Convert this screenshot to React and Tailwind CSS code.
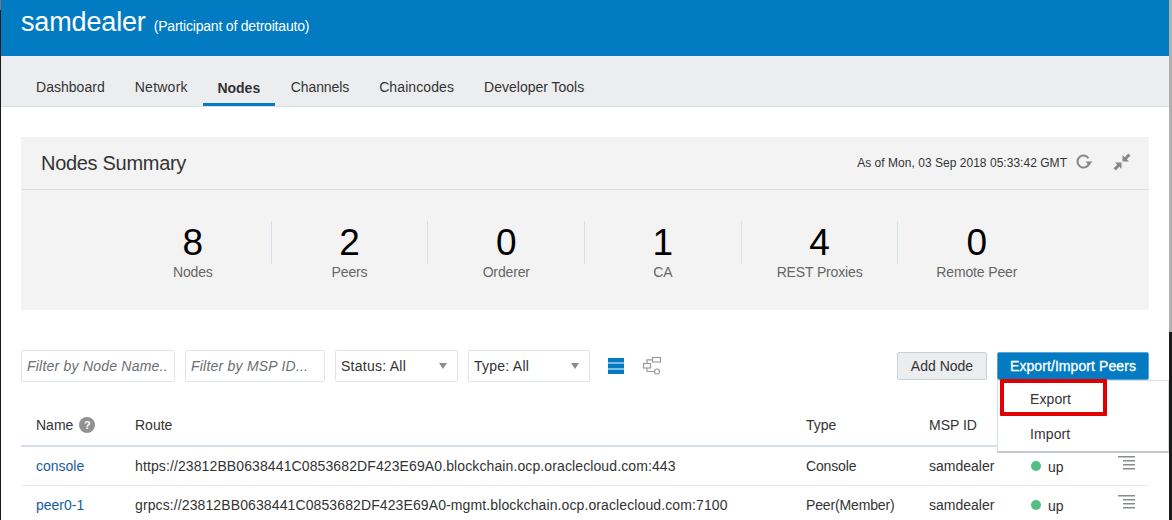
const tabs = [
  { name: 'Dashboard', cls: 'tracking-[0.03px]' },
  { name: 'Network', cls: 'tracking-[0.24px]' },
  { name: 'Nodes', active: true },
  { name: 'Channels', cls: 'tracking-[-0.1px]' },
  { name: 'Chaincodes', cls: 'tracking-[0.1px]' },
  { name: 'Developer Tools' },
];

const stats = [
  { value: '8', label: 'Nodes' },
  { value: '2', label: 'Peers' },
  { value: '0', label: 'Orderer' },
  { value: '1', label: 'CA' },
  { value: '4', label: 'REST Proxies' },
  { value: '0', label: 'Remote Peer' },
];

const rows = [
  {
    name: 'console',
    route: 'https://23812BB0638441C0853682DF423E69A0.blockchain.ocp.oraclecloud.com:443',
    type: 'Console',
  },
  {
    name: 'peer0-1',
    route: 'grpcs://23812BB0638441C0853682DF423E69A0-mgmt.blockchain.ocp.oraclecloud.com:7100',
    type: 'Peer(Member)',
  },
];

function RefreshIcon() {
  return (
    <svg width="17" height="15" viewBox="0 0 17 15" fill="none">
      <path d="M12.500 4.200A6 6 0 1 0 13 10" stroke="#85888b" strokeWidth="2" />
      <path d="M9.500 7.500h7l-3.500 4z" fill="#85888b" />
    </svg>
  );
}

function CollapseIcon() {
  return (
    <svg width="18" height="18" viewBox="0 0 18 18" fill="#85888b">
      <path d="M9.500 8.500V2l2.200 2.200L15.200 .5 17.500 2.800 13.800 6.300 16 8.500z" />
      <path d="M8.500 9.500V16l-2.200-2.200L2.800 17.500 .5 15.200 4.200 11.700 2 9.500z" />
    </svg>
  );
}

function TopologyIcon() {
  return (
    <svg width="20" height="20" viewBox="0 0 20 20" fill="none" stroke="#9a9da0" strokeWidth="1.200">
      <rect x="10.500" y="1.500" width="8" height="4.500" />
      <rect x="1.500" y="7.500" width="7" height="4.500" />
      <circle cx="15" cy="15.500" r="2.500" />
      <path d="M5 7.500V3.800h5.500M5 12v3.500h7.500" />
    </svg>
  );
}

function ListIcon() {
  return (
    <svg width="16" height="16" viewBox="0 0 16 16" fill="#027bc3">
      <rect x="0" y="0" width="16" height="4.500" />
      <rect x="0" y="5.500" width="16" height="5" />
      <rect x="0" y="11.500" width="16" height="4.500" />
    </svg>
  );
}

function RowMenuIcon() {
  return (
    <svg width="17" height="15" viewBox="0 0 17 15" fill="#8a8d90">
      <rect x="0" y="0" width="17" height="1.500" />
      <rect x="5" y="4" width="12" height="1.500" />
      <rect x="5" y="8" width="12" height="1.500" />
      <rect x="5" y="12" width="12" height="1.500" />
    </svg>
  );
}

function SelectBox({ label, width }) {
  return (
    <div className={`${width} h-8 flex items-center justify-between pl-[5px] pr-[10px] bg-white border border-[#dfe4e7] rounded-[2px]`}>
      <span className="text-[14px] tracking-[0.25px] text-[#333]">{label}</span>
      <span className="w-0 h-0 border-x-[4.500px] border-x-transparent border-t-[6px] border-t-[#8a8d90]" />
    </div>
  );
}

export default function App() {
  return (
    <div className="relative w-[1172px] h-[520px] overflow-hidden bg-white font-['Liberation_Sans',Arial,sans-serif] text-[#333]">
      {/* Header */}
      <header className="h-14 bg-[#027bc3] pl-[21px] pt-[4px] flex items-start gap-[8px] text-white">
        <span className="text-[27px] leading-[36px] tracking-[-0.15px]">samdealer</span>
        <span className="text-[14px] leading-[18px] mt-[13px] tracking-[-0.2px]">(Participant of detroitauto)</span>
      </header>

      {/* Nav tabs */}
      <nav className="h-[51px] bg-[#ecedef] border-b border-[#d6dfe6] pl-[21px] flex items-end">
        {tabs.map((tab) => (
          <div
            key={tab.name}
            className={
              tab.active
                ? 'h-[50px] mr-px pt-[23px] border-b-[3px] border-[#027bc3] w-[72px] text-center text-[14px] leading-[18px] font-bold text-[#333]'
                : `h-[50px] px-[15px] pt-[22px] text-[14px] leading-[18px] text-[#333] ${tab.cls || ''}`
            }
          >
            {tab.name}
          </div>
        ))}
      </nav>

      <main className="px-[21px] pt-[30px] w-[1149px] box-content">
        {/* Summary panel */}
        <section className="w-[1128px] h-[173px] bg-[#f3f3f3]">
          <div className="h-[53px] border-b border-[#d6dfe6] pl-5 pr-[18px] flex items-center justify-between">
            <h2 className="text-[20px] tracking-[-0.3px] text-[#333]">Nodes Summary</h2>
            <div className="flex items-center">
              <span className="text-[12px] tracking-[0.03px] text-[#333] mt-[-1px]">As of Mon, 03 Sep 2018 05:33:42 GMT</span>
              <span className="ml-[9px] mb-[4px]">
                <RefreshIcon />
              </span>
              <span className="ml-[20px] mb-[3px]">
                <CollapseIcon />
              </span>
            </div>
          </div>
          <div className="pl-[94px] pt-[31px] flex">
            {stats.map((stat, i) => (
              <div
                key={i}
                className={`w-[156.700px] h-[43px] flex flex-col items-center ${i < 5 ? 'border-r border-[#d6dfe6]' : ''}`}
              >
                <span className="text-[37px] leading-[44px] text-black">{stat.value}</span>
                <span className="text-[14px] leading-[18px] mt-[-2px] tracking-[-0.15px] text-[#666]">{stat.label}</span>
              </div>
            ))}
          </div>
        </section>

        {/* Toolbar */}
        <div className="mt-10 h-8 w-[1128px] flex items-center">
          <div className="w-[154px] h-8 flex items-center pl-[5px] pt-px bg-white border border-[#dfe4e7] rounded-[2px] text-[14px] tracking-[0.22px] italic text-[#6b6f73] whitespace-nowrap overflow-hidden">
            Filter by Node Name..
          </div>
          <div className="ml-[10px] w-[140px] h-8 flex items-center pl-[5px] pt-px bg-white border border-[#dfe4e7] rounded-[2px] text-[14px] tracking-[0.22px] italic text-[#6b6f73] whitespace-nowrap overflow-hidden">
            Filter by MSP ID...
          </div>
          <div className="ml-[10px]">
            <SelectBox label="Status: All" width="w-[123px]" />
          </div>
          <div className="ml-[10px]">
            <SelectBox label="Type: All" width="w-[122px]" />
          </div>
          <span className="ml-[18px]">
            <ListIcon />
          </span>
          <span className="ml-[18px] mt-[-1px]">
            <TopologyIcon />
          </span>
          <button className="ml-auto w-[90px] h-7 bg-[#ecedef] border border-[#c9d2d8] rounded-[2px] text-[14px] text-[#333]">
            Add Node
          </button>
          <button className="ml-[10px] w-[152px] h-7 bg-[#027bc3] border border-[#5aa5d6] rounded-[2px] text-[14px] tracking-[0.08px] [-webkit-text-stroke:0.3px_white] text-white">
            Export/Import Peers
          </button>
        </div>

        {/* Nodes table */}
        <div className="mt-[23px] w-[1128px] text-[14px]">
          <div className="h-[42px] border-b-2 border-[#d6dfe6] flex items-center">
            <div className="w-[114px] pl-[15px] flex items-center gap-[6px]">
              Name
              <span className="w-4 h-4 rounded-full bg-[#8f9194] text-white text-[11px] leading-4 text-center font-bold">?</span>
            </div>
            <div className="w-[671px]">Route</div>
            <div className="w-[123px]">Type</div>
            <div>MSP ID</div>
          </div>
          {rows.map((row) => (
            <div key={row.name} className="h-[39px] border-b border-[#e8eaec] flex items-center">
              <div className="w-[114px] pl-[15px] text-[#145c9e]">{row.name}</div>
              <div className="w-[671px] tracking-[0.11px] whitespace-nowrap">{row.route}</div>
              <div className="w-[123px] tracking-[-0.15px]">{row.type}</div>
              <div className="w-[102px]">samdealer</div>
              <div className="w-[87px] flex items-center gap-[7px]">
                <span className="w-[10px] h-[10px] rounded-full bg-[#54bd85]" />
                <span className="mt-[2px]">up</span>
              </div>
              <span className="mt-[-6px]">
                <RowMenuIcon />
              </span>
            </div>
          ))}
        </div>
      </main>

      {/* Export/Import dropdown */}
      <div className="absolute left-[997px] top-[380px] w-[172px] h-[73px] bg-white border border-[#d6dfe6] border-b-2 border-b-[#c3c9ce] text-[14px] text-[#333]">
        <div className="h-[36px] pl-[32px] tracking-[0.1px] flex items-center">Export</div>
        <div className="h-[35px] pl-[32px] tracking-[0.1px] flex items-center">Import</div>
      </div>
      <div className="absolute left-[1000px] top-[379px] w-[107px] h-[37px] border-[4px] border-[#e00000] rounded-[1px]" />

      {/* Window edges */}
      <div className="absolute left-0 top-0 h-[10px] w-px bg-[#777]" />
      <div className="absolute left-0 top-[10px] bottom-0 w-px bg-[#1a1a1a]" />
      <div className="absolute right-0 top-0 h-[332px] w-[3px] bg-[#b0b0b0]" />
      <div className="absolute right-0 top-[332px] bottom-0 w-[3px] bg-[#1a1a1a]" />
    </div>
  );
}
